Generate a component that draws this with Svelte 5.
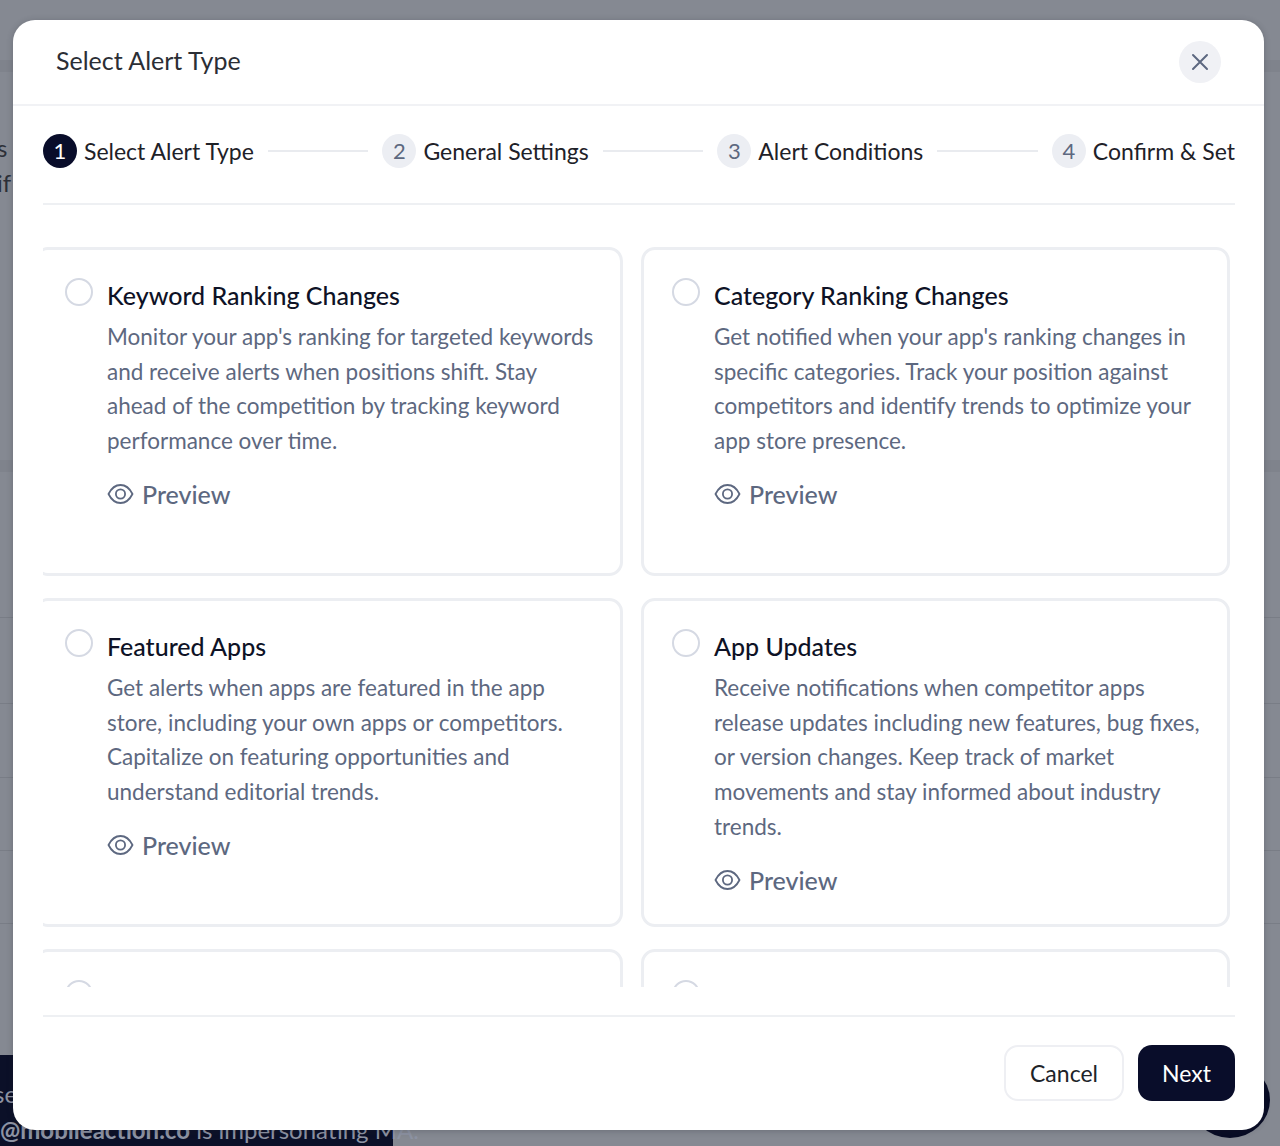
<script>
  const steps = [
    { n: 1, label: 'Select Alert Type' },
    { n: 2, label: 'General Settings' },
    { n: 3, label: 'Alert Conditions' },
    { n: 4, label: 'Confirm & Set' }
  ];

  const alertTypes = [
    {
      title: 'Keyword Ranking Changes',
      lines: [
        "Monitor your app's ranking for targeted keywords",
        'and receive alerts when positions shift. Stay',
        'ahead of the competition by tracking keyword',
        'performance over time.'
      ]
    },
    {
      title: 'Category Ranking Changes',
      lines: [
        "Get notified when your app's ranking changes in",
        'specific categories. Track your position against',
        'competitors and identify trends to optimize your',
        'app store presence.'
      ]
    },
    {
      title: 'Featured Apps',
      lines: [
        'Get alerts when apps are featured in the app',
        'store, including your own apps or competitors.',
        'Capitalize on featuring opportunities and',
        'understand editorial trends.'
      ]
    },
    {
      title: 'App Updates',
      lines: [
        'Receive notifications when competitor apps',
        'release updates including new features, bug fixes,',
        'or version changes. Keep track of market',
        'movements and stay informed about industry',
        'trends.'
      ]
    }
  ];
</script>

<div class="page">
  <div class="rows">
    <div class="row band" style="height: 72px"></div>
    <div class="row" style="height: 160px"><span class="peek">s<br />if</span></div>
    <div class="row band" style="height: 240px"></div>
    <div class="row line" style="height: 146px"></div>
    <div class="row line" style="height: 86px"></div>
    <div class="row line" style="height: 74px"></div>
    <div class="row line" style="height: 73px"></div>
    <div class="row line" style="height: 73px"></div>
    <div class="row" style="height: 60px"></div>
  </div>

  <div class="banner">
    <span class="banner-top">se</span>
    <span class="banner-bottom"><b>@mobileaction.co</b> is impersonating MA.</span>
  </div>
  <div class="chat"></div>

  <div class="modal">
    <header class="modal-head">
      <h2>Select Alert Type</h2>
      <button class="close" aria-label="Close">
        <svg width="22" height="22" viewBox="0 0 22 22" fill="none">
          <path d="M4 4l14 14M18 4L4 18" stroke="#5d6880" stroke-width="2" stroke-linecap="round" />
        </svg>
      </button>
    </header>

    <div class="body">
      <ol class="steps">
        {#each steps as step, i}
          {#if i > 0}
            <li class="connector"></li>
          {/if}
          <li class="step" class:active={i === 0}>
            <span class="num">{step.n}</span>
            <span class="label">{step.label}</span>
          </li>
        {/each}
      </ol>

      <div class="scroller">
        <div class="grid">
          {#each alertTypes as item}
            <div class="card">
              <span class="radio"></span>
              <div class="card-text">
                <h3>{item.title}</h3>
                <p>
                  {#each item.lines as line}
                    <span class="ln">{line}</span>
                  {/each}
                </p>
                <div class="preview">
                  <svg width="27" height="22" viewBox="0 0 27 22" fill="none">
                    <path d="M1.5 11C4.5 5 8.5 2 13.5 2s9 3 12 9c-3 6-7 9-12 9s-9-3-12-9z" stroke="#5d6880" stroke-width="1.8" stroke-linejoin="round" />
                    <circle cx="13.5" cy="11" r="4.6" stroke="#5d6880" stroke-width="1.8" />
                  </svg>
                  <span>Preview</span>
                </div>
              </div>
            </div>
          {/each}
          <div class="card"><span class="radio"></span></div>
          <div class="card"><span class="radio"></span></div>
        </div>
      </div>

      <footer class="foot">
        <button class="btn cancel">Cancel</button>
        <button class="btn next">Next</button>
      </footer>
    </div>
  </div>
</div>

<style>
  :global(body) {
    margin: 0;
    font-family: 'Lato', 'Noto Sans', sans-serif;
  }

  .page {
    position: relative;
    width: 1280px;
    height: 1146px;
    overflow: hidden;
    background: #858992;
  }

  .rows {
    padding-top: 0;
  }

  .row {
    box-sizing: border-box;
    position: relative;
  }

  .band {
    border-bottom: 12px solid #7f838c;
  }

  .line {
    border-bottom: 1px solid #797d86;
  }

  .peek {
    position: absolute;
    left: -3px;
    top: 58px;
    font-size: 24px;
    line-height: 35px;
    color: #2d3038;
  }

  .banner {
    position: absolute;
    left: 0;
    bottom: 0;
    width: 393px;
    height: 91px;
    background: #0b1028;
    color: #8d93a3;
    font-size: 24px;
  }

  .banner-top {
    position: absolute;
    left: -6px;
    top: 24px;
  }

  .banner-bottom {
    position: absolute;
    left: 0;
    top: 60px;
    white-space: nowrap;
  }

  .chat {
    position: absolute;
    left: 1190px;
    top: 1062px;
    width: 80px;
    height: 76px;
    border-radius: 50%;
    background: #070b24;
  }

  .modal {
    position: absolute;
    left: 13px;
    top: 20px;
    width: 1251px;
    height: 1110px;
    background: #fff;
    border-radius: 22px;
    box-shadow: 0 1px 6px rgba(30, 34, 45, 0.25);
    overflow: hidden;
  }

  .modal-head {
    display: flex;
    align-items: center;
    justify-content: space-between;
    box-sizing: border-box;
    height: 86px;
    padding: 0 43px;
    border-bottom: 2px solid #f1f2f5;
  }

  h2 {
    margin: 0 0 4px;
    font-size: 25px;
    font-weight: 400;
    color: #2b2e35;
  }

  .close {
    display: flex;
    align-items: center;
    justify-content: center;
    width: 42px;
    height: 42px;
    margin: 0 0 0 0;
    padding: 0;
    border: 0;
    border-radius: 50%;
    background: #f0f1f5;
  }

  .body {
    padding: 0 29px 0 30px;
  }

  .steps {
    display: flex;
    align-items: center;
    box-sizing: border-box;
    height: 99px;
    margin: 0;
    padding: 0 0 8px;
    list-style: none;
    border-bottom: 2px solid #eef0f3;
  }

  .step {
    display: flex;
    align-items: center;
    gap: 7px;
    white-space: nowrap;
  }

  .num {
    display: flex;
    align-items: center;
    justify-content: center;
    width: 34px;
    height: 34px;
    border-radius: 50%;
    background: #eceef3;
    color: #5d6880;
    font-size: 22px;
  }

  .active .num {
    background: #090d2a;
    color: #fff;
  }

  .label {
    font-size: 23px;
    color: #1e2128;
  }

  .connector {
    flex: 1;
    height: 2px;
    margin: 0 14px;
    background: #e9ebef;
  }

  .scroller {
    height: 782px;
    overflow: hidden;
    border-bottom: 0;
  }

  .grid {
    display: grid;
    grid-template-columns: 589px 589px;
    grid-auto-rows: 329px;
    gap: 22px 18px;
    margin: 42px 0 0 -9px;
  }

  .card {
    display: flex;
    gap: 14px;
    box-sizing: border-box;
    padding: 28px 20px 0 28px;
    border: 3px solid #eceef2;
    border-radius: 14px;
    background: #fff;
  }

  .radio {
    flex: none;
    box-sizing: border-box;
    width: 28px;
    height: 28px;
    border: 2px solid #d5d9e3;
    border-radius: 50%;
  }

  h3 {
    margin: 0;
    font-size: 25px;
    line-height: 34px;
    font-weight: 500;
    color: #0e1226;
  }

  p {
    margin: 8px 0 0;
    font-size: 22.5px;
    line-height: 34.7px;
    color: #5d6880;
  }

  .ln {
    display: block;
    white-space: nowrap;
  }

  .preview {
    display: flex;
    align-items: center;
    gap: 8px;
    margin-top: 20px;
    font-size: 25px;
    font-weight: 500;
    color: #5d6880;
  }

  .foot {
    display: flex;
    justify-content: flex-end;
    gap: 14px;
    padding-top: 28px;
    border-top: 2px solid #eef0f3;
    margin-top: 28px;
  }

  .btn {
    height: 56px;
    border-radius: 14px;
    font-family: inherit;
    font-size: 23px;
  }

  .cancel {
    width: 120px;
    background: #fff;
    border: 2px solid #eeeff3;
    color: #202329;
  }

  .next {
    width: 97px;
    border: 0;
    background: #090d2a;
    color: #fff;
  }
</style>
